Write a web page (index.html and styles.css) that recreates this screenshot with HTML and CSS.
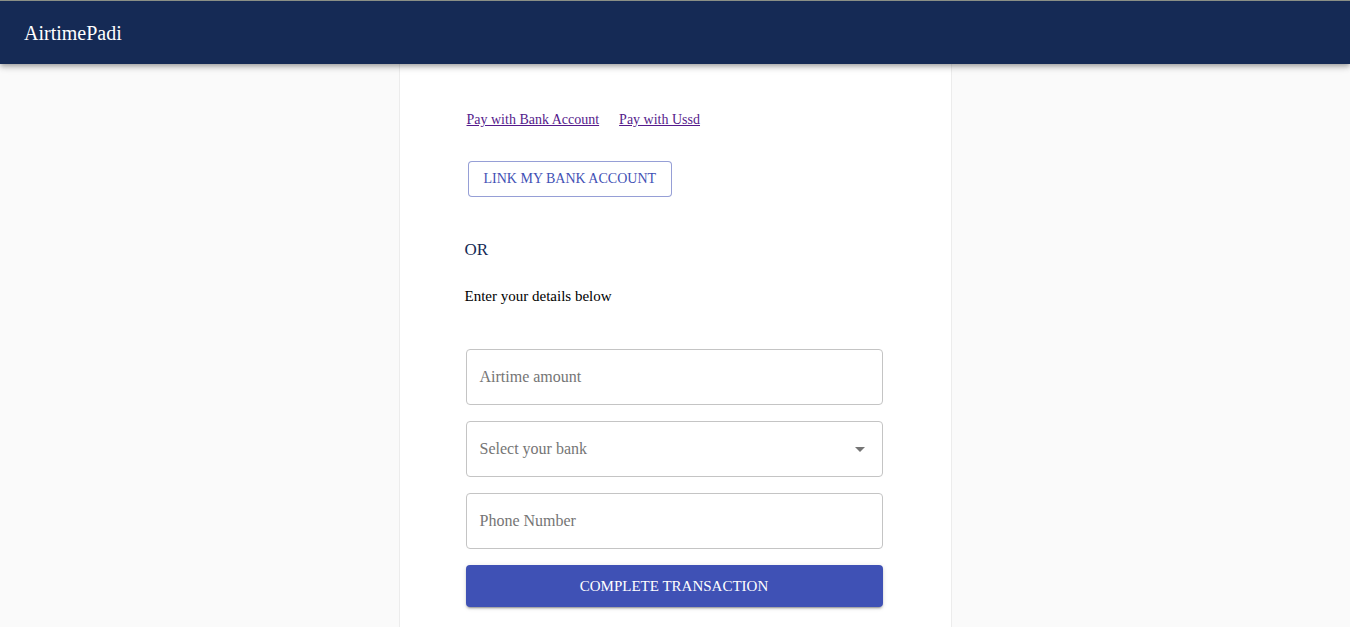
FILE: index.html
```html
<!DOCTYPE html>
<html>
<head>
<meta charset="utf-8">
<link rel="stylesheet" href="styles.css">
</head>
<body>
<header class="appbar"><span class="brand">AirtimePadi</span></header>
<main class="page">
  <section class="card">
    <nav class="tabs">
      <a href="#bank" class="tab">Pay with Bank Account</a>
      <a href="#ussd" class="tab">Pay with Ussd</a>
    </nav>
    <button class="btn-outline">LINK MY BANK ACCOUNT</button>
    <h2 class="or">OR</h2>
    <p class="hint">Enter your details below</p>
    <form class="form">
      <div class="field"><span class="placeholder">Airtime amount</span></div>
      <div class="field select"><span class="placeholder">Select your bank</span><span class="caret"></span></div>
      <div class="field"><span class="placeholder">Phone Number</span></div>
      <button type="button" class="btn-primary">COMPLETE TRANSACTION</button>
    </form>
  </section>
</main>
</body>
</html>
```
FILE: styles.css
```css
html, body {
  margin: 0;
  padding: 0;
  height: 100%;
  overflow: hidden;
}
body {
  background: #fafafa;
  font-family: "Liberation Serif", "Times New Roman", serif;
  color: #000;
}
.appbar {
  position: relative;
  z-index: 2;
  height: 64px;
  box-sizing: border-box;
  border-top: 1px solid #8a8f86;
  background: #152a55;
  display: flex;
  align-items: center;
  padding: 0 24px;
  box-shadow: 0 2px 4px -1px rgba(0,0,0,0.2), 0 4px 5px 0 rgba(0,0,0,0.14), 0 1px 10px 0 rgba(0,0,0,0.12);
}
.brand {
  color: #fff;
  font-size: 20px;
  line-height: 1;
}
.page {
  display: flex;
  justify-content: center;
  height: calc(100% - 64px);
}
.card {
  width: 553px;
  box-sizing: border-box;
  background: #fff;
  border-left: 1px solid #ececec;
  border-right: 1px solid #ececec;
  padding: 47px 68px 0 67px;
}
.tabs {
  display: flex;
  gap: 20px;
  font-size: 14px;
  line-height: 18px;
}
.tab {
  color: #551a8b;
  text-decoration: underline;
}
.btn-outline {
  margin-top: 32px;
  margin-left: 1px;
  height: 36px;
  padding: 0 15px;
  background: #fff;
  border: 1px solid rgba(63,81,181,0.55);
  border-radius: 4px;
  color: #3f51b5;
  font-family: inherit;
  font-size: 14px;
}
.or {
  margin: 43px 0 0 -2px;
  font-size: 17px;
  font-weight: normal;
  color: #152a55;
  line-height: 20px;
}
.hint {
  margin: 28px 0 0 -2px;
  font-size: 15px;
  line-height: 17px;
}
.form {
  margin-top: 44px;
  display: flex;
  flex-direction: column;
  gap: 16px;
  margin-left: -1px;
}
.field {
  height: 56px;
  box-sizing: border-box;
  border: 1px solid #c4c4c4;
  border-radius: 4px;
  display: flex;
  align-items: center;
  padding: 0 13px;
  justify-content: space-between;
}
.placeholder {
  color: #757575;
  font-size: 16px;
}
.caret {
  width: 0;
  height: 0;
  border-left: 5px solid transparent;
  border-right: 5px solid transparent;
  border-top: 5px solid #757575;
  margin-right: 4px;
}
.btn-primary {
  height: 42px;
  border: none;
  border-radius: 4px;
  background: #3f51b5;
  color: #fff;
  font-family: inherit;
  font-size: 15px;
  font-weight: 500;
  box-shadow: 0 3px 1px -2px rgba(0,0,0,0.2), 0 2px 2px 0 rgba(0,0,0,0.14), 0 1px 5px 0 rgba(0,0,0,0.12);
}
```
